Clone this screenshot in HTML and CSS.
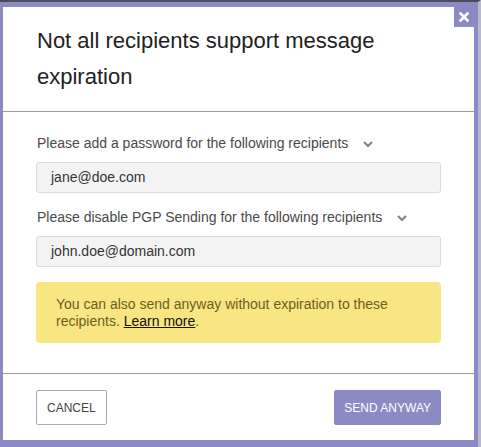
FILE: index.html
```html
<!DOCTYPE html>
<html lang="en">
<head>
  <meta charset="UTF-8" />
  <title>Send anyway</title>
  <link rel="stylesheet" href="styles.css">
</head>
<body>
  <div class="modal">
    <button class="close" aria-label="Close">
      <svg width="10" height="10" viewBox="0 0 10 10"><path d="M1.5 1.5 L8.5 8.5 M8.5 1.5 L1.5 8.5" stroke="#fff" stroke-width="2.6" stroke-linecap="square"/></svg>
    </button>
    <div class="modal-header">
      <h2>Not all recipients support message expiration</h2>
    </div>
    <div class="modal-body">
      <div class="label">Please add a password for the following recipients
        <svg class="chevron" width="10" height="6" viewBox="0 0 10 6"><path d="M1 1 L5 5 L9 1" fill="none" stroke="#7d7ca8" stroke-width="2"/></svg>
      </div>
      <div class="field">jane@doe.com</div>
      <div class="label">Please disable PGP Sending for the following recipients
        <svg class="chevron" width="10" height="6" viewBox="0 0 10 6"><path d="M1 1 L5 5 L9 1" fill="none" stroke="#7d7ca8" stroke-width="2"/></svg>
      </div>
      <div class="field">john.doe@domain.com</div>
      <p class="notice">You can also send anyway without expiration to these recipients. <a href="#">Learn more</a>.</p>
    </div>
    <div class="modal-footer">
      <button class="btn">Cancel</button>
      <button class="btn primary">Send anyway</button>
    </div>
  </div>
</body>
</html>
```

FILE: styles.css
```css
html, body {
  margin: 0;
  height: 100%;
}
body {
  font-family: Arial, "Liberation Sans", sans-serif;
  background: #8c8ac4;
  border-top: 2px solid #4d4d5a;
  border-right: 3px solid #b9b9cc;
  box-sizing: border-box;
  padding: 5px 4px 7px 3px;
}
.modal {
  position: relative;
  background: #fff;
  width: 471px;
  height: 433px;
  display: flex;
  flex-direction: column;
}
.close {
  position: absolute;
  top: 0;
  right: 0;
  width: 20px;
  height: 20px;
  border: none;
  padding: 0;
  background: #8c8ac4;
  display: flex;
  align-items: center;
  justify-content: center;
}
.modal-header {
  padding: 16px 33px 16px 34px;
  border-bottom: 1px solid #9c9c9c;
}
h2 {
  margin: 0;
  font-weight: normal;
  font-size: 22px;
  line-height: 36px;
  color: #222;
}
.modal-body {
  padding: 21px 33px 30px 33px;
  border-bottom: 1px solid #9c9c9c;
}
.label {
  font-size: 14px;
  line-height: 20px;
  color: #4a4a4a;
  margin-bottom: 9px;
  padding-left: 1px;
}
.chevron {
  margin-left: 11px;
  vertical-align: middle;
}
.field {
  background: #f3f3f3;
  border: 1px solid #dcdcdc;
  border-radius: 3px;
  height: 29px;
  line-height: 29px;
  padding: 0 14px;
  font-size: 14px;
  color: #333;
  margin-bottom: 14px;
}
.notice {
  margin: 15px 0 0 0;
  background: #f8e683;
  border-radius: 4px;
  padding: 14px 20px 13px 20px;
  font-size: 14px;
  line-height: 17px;
  color: #6c5f1e;
}
.notice a {
  color: #111;
}
.modal-footer {
  flex: 1;
  display: flex;
  justify-content: space-between;
  align-items: flex-start;
  padding: 16px 33px 0 33px;
}
.btn {
  height: 35px;
  padding: 0 10px;
  font-family: Arial, "Liberation Sans", sans-serif;
  font-size: 12px;
  text-transform: uppercase;
  color: #444;
  background: #fff;
  border: 1px solid #aaa;
  border-radius: 2px;
}
.btn.primary {
  background: #8c8ac4;
  border-color: #8c8ac4;
  color: #fff;
  padding: 0 9px;
}
```
